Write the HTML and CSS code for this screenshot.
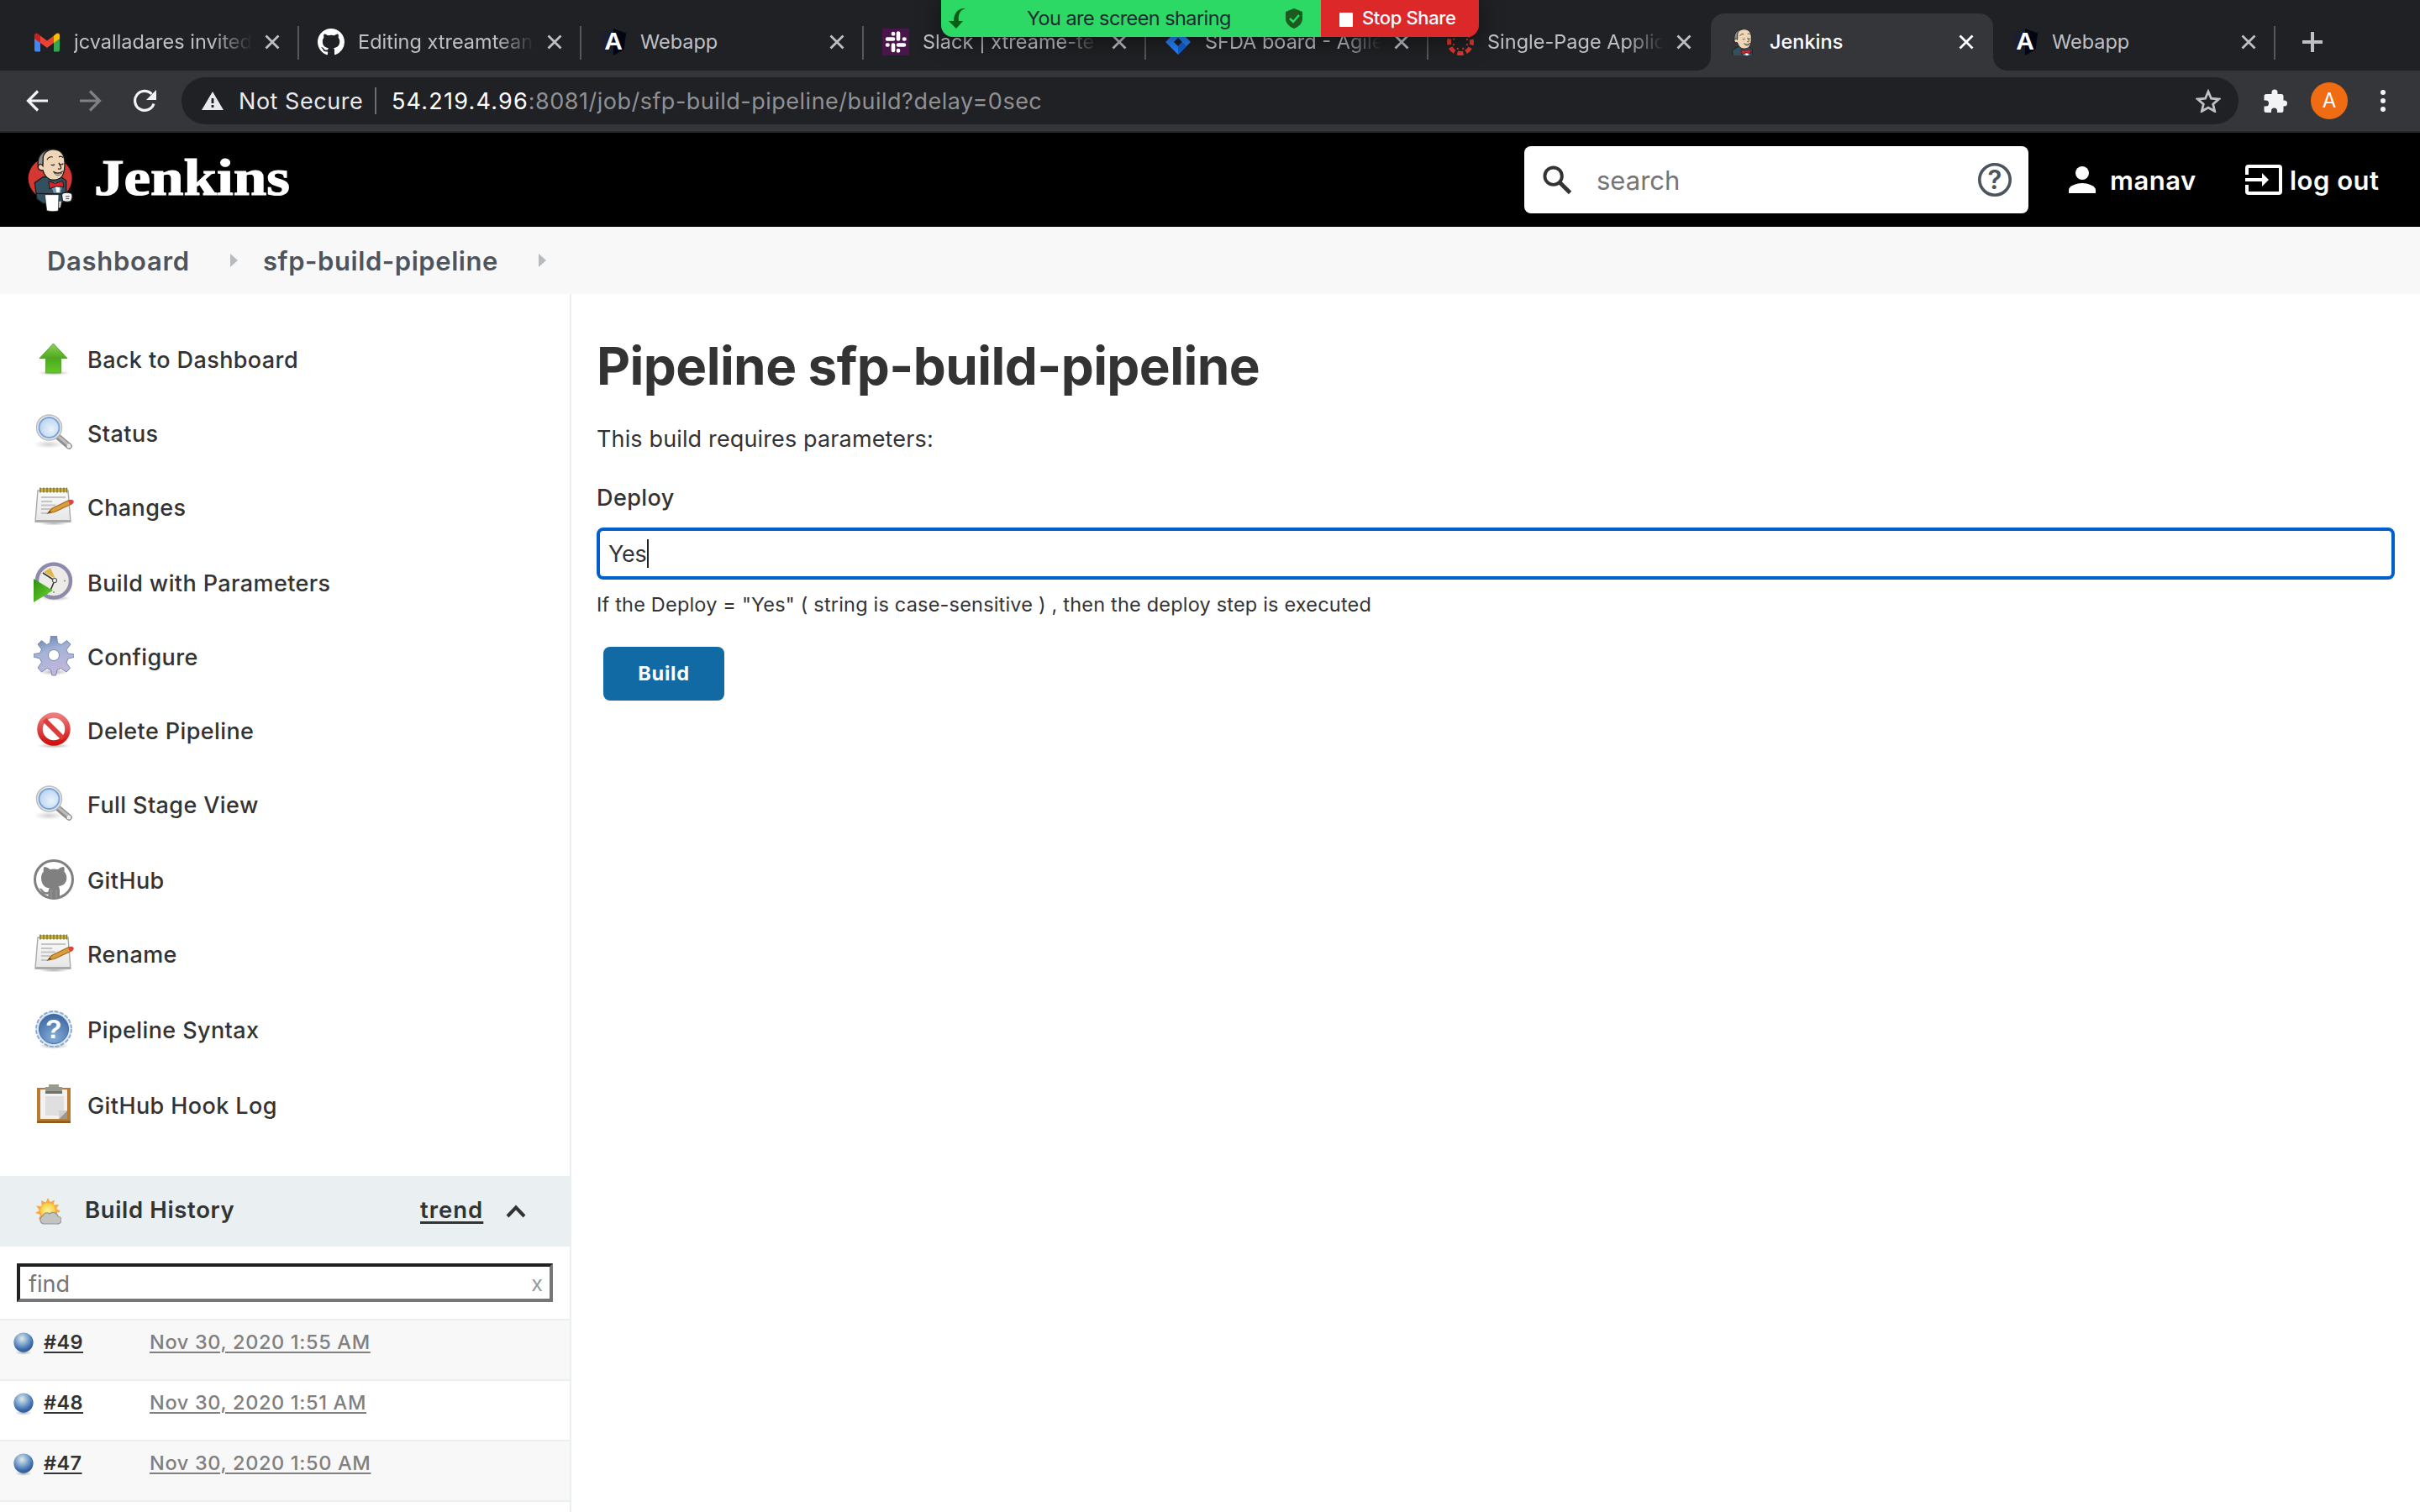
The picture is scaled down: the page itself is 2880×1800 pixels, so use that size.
FILE: index.html
```html
<!DOCTYPE html>
<html lang="en">
<head>
<meta charset="utf-8">
<title>Jenkins</title>
<link rel="stylesheet" href="styles.css">
</head>
<body>
<svg class="defs" aria-hidden="true">
  <defs>
    <linearGradient id="gGreen" x1="0" y1="0" x2="0" y2="1"><stop offset="0" stop-color="#8fd055"/><stop offset=".5" stop-color="#4da81f"/><stop offset="1" stop-color="#63c92b"/></linearGradient>
    <linearGradient id="gPlay" x1="0" y1="0" x2="1" y2="1"><stop offset="0" stop-color="#2c8f10"/><stop offset="1" stop-color="#6fd836"/></linearGradient>
    <linearGradient id="gRed" x1="0" y1="0" x2="0" y2="1"><stop offset="0" stop-color="#ec7a7a"/><stop offset="1" stop-color="#d21010"/></linearGradient>
    <linearGradient id="gGear" x1="0" y1="0" x2=".3" y2="1"><stop offset="0" stop-color="#5f7fae"/><stop offset=".45" stop-color="#a3b3d6"/><stop offset="1" stop-color="#c3b6dc"/></linearGradient>
    <linearGradient id="gPaper" x1="0" y1="0" x2="0" y2="1"><stop offset="0" stop-color="#fafafa"/><stop offset="1" stop-color="#e6e6e6"/></linearGradient>
    <radialGradient id="gLens" cx=".6" cy=".6" r=".7"><stop offset="0" stop-color="#e9f3fc"/><stop offset="1" stop-color="#b4d0ee"/></radialGradient>
    <radialGradient id="gHelp" cx=".5" cy=".8" r=".8"><stop offset="0" stop-color="#85acd8"/><stop offset="1" stop-color="#3c68a2"/></radialGradient>
    <radialGradient id="gBall" cx=".42" cy=".3" r=".75"><stop offset="0" stop-color="#e2eae4"/><stop offset=".35" stop-color="#8fb2d4"/><stop offset=".75" stop-color="#3c6cae"/><stop offset="1" stop-color="#2b5594"/></radialGradient>
    <radialGradient id="gShade"><stop offset="0" stop-color="#000" stop-opacity=".3"/><stop offset="1" stop-color="#000" stop-opacity="0"/></radialGradient>
    <radialGradient id="gSun"><stop offset="0" stop-color="#fff3a0"/><stop offset="1" stop-color="#f5cf3c"/></radialGradient>
  </defs>
  <symbol id="close" viewBox="0 0 18 18"><path d="M1.500 1.500l15 15M16.500 1.500l-15 15" fill="none" stroke="currentColor" stroke-width="2.800"/></symbol>
  <symbol id="github" viewBox="0 0 16 16"><path fill="currentColor" d="M8 0C3.580 0 0 3.580 0 8c0 3.540 2.290 6.530 5.470 7.590.4.070.55-.17.55-.38 0-.19-.01-.82-.01-1.490-2.010.37-2.530-.49-2.690-.94-.09-.23-.48-.94-.82-1.130-.28-.15-.68-.52-.01-.53.63-.01 1.080.58 1.230.82.72 1.210 1.870.87 2.330.66.07-.52.28-.87.51-1.070-1.780-.2-3.640-.89-3.640-3.950 0-.87.31-1.590.82-2.150-.08-.2-.36-1.020.08-2.120 0 0 .67-.21 2.200.82.64-.18 1.320-.27 2-.27.68 0 1.360.09 2 .27 1.530-1.040 2.200-.82 2.200-.82.44 1.100.16 1.920.08 2.120.51.56.82 1.270.82 2.150 0 3.070-1.870 3.750-3.650 3.950.29.25.54.73.54 1.480 0 1.070-.01 1.930-.01 2.200 0 .21.15.46.55.38A8.013 8.013 0 0016 8c0-4.420-3.580-8-8-8z"/></symbol>
  <symbol id="butler" viewBox="39 45 162 228">
    <path d="M92 150l-28 20 8 58 22 16 74-6 8-32 0-44-22-16z" fill="#335061" stroke="#1a1a1a" stroke-width="4"/>
    <path d="M118 170l14 36 24 0 10-40z" fill="#6d9bb5"/>
    <path d="M136 174l6 30 10 0 2-30z" fill="#fff"/>
    <path d="M76 112c-4-34 12-58 44-62l-20 30-2 36z" fill="#8e8e90" stroke="#1a1a1a" stroke-width="4"/>
    <path d="M94 76c6-20 26-27 42-25 24 3 34 20 35 44 1 22-2 40-10 52-8 12-28 16-44 10-12-5-20-18-24-32-12 2-20-6-16-16 3-7 12-6 16 0z" fill="#f0d6b7" stroke="#1a1a1a" stroke-width="4"/>
    <path d="M108 88c4-9 12-12 20-10M150 78c5-4 12-3 15 2M122 105c5 3 9 3 13-1M154 103c4 3 8 3 12-2M150 98c2 10 10 14 8 20-2 4-8 3-11 1M130 130c12 8 24 7 35-2" fill="none" stroke="#1a1a1a" stroke-width="3.500"/>
    <path d="M133 134c10 6 22 5 28 0-6 12-22 12-28 0z" fill="#fff" stroke="#1a1a1a" stroke-width="2"/>
    <path d="M114 164l22 8 28-9 4 22-28-2-24 8z" fill="#d8232a" stroke="#1a1a1a" stroke-width="3"/>
    <path d="M68 208l90 2" stroke="#1a1a1a" stroke-width="4"/>
    <path d="M160 212c4-10 32-10 37-2 3 10 0 24-6 27-10 2-22 0-28-3z" fill="#f4f4f4" stroke="#1a1a1a" stroke-width="4"/>
    <path d="M174 219l14-1M175 227l12 0" stroke="#444" stroke-width="3"/>
    <path d="M148 236l12 0-4 22-8 2z" fill="#c9c9c9"/>
    <path d="M100 212l50 0-2 58c-14 3-28 3-41-1z" fill="#fff" stroke="#1a1a1a" stroke-width="2"/>
  </symbol>
  <symbol id="up" viewBox="0 0 48 48">
    <ellipse cx="24" cy="41" rx="19" ry="3" fill="url(#gShade)"/>
    <path d="M23.500 6L40 23.500h-7.500V41h-18V23.500H7z" fill="url(#gGreen)" stroke="#5aa534" stroke-width="1"/>
  </symbol>
  <symbol id="lens" viewBox="0 0 48 48">
    <ellipse cx="18" cy="38" rx="18" ry="5" fill="url(#gShade)" opacity=".6"/>
    <path d="M29 29l13 11" stroke="#8d8d8d" stroke-width="7.500" stroke-linecap="round"/><path d="M30 29l12 10" stroke="#bdbdbd" stroke-width="3"/>
    <circle cx="42" cy="40" r="2.500" fill="#ededed"/>
    <circle cx="18.500" cy="18" r="15" fill="#eee" stroke="#bcbcbc" stroke-width="1.500"/>
    <circle cx="18.500" cy="18" r="12" fill="url(#gLens)" stroke="#7ba5d6" stroke-width="2"/>
  </symbol>
  <symbol id="note" viewBox="0 0 48 48">
    <ellipse cx="24" cy="44" rx="18" ry="2.500" fill="url(#gShade)"/>
    <path d="M5 5h36l3 37H2z" fill="url(#gPaper)" stroke="#a9a9a9" stroke-width="1.400"/><path d="M2.500 40h41v3h-41z" fill="#aaa"/>
    <path d="M7 2h33v5H7z" fill="#c9b44c"/><path d="M8 1.500v6M12 1.500v6M16 1.500v6M20 1.500v6M24 1.500v6M28 1.500v6M32 1.500v6M36 1.500v6M39.500 1.500v6" stroke="#8d7a20" stroke-width="1.500"/>
    <path d="M9 13h29M9 18h13M9 22.500h17M9 27h11M9 32h8" stroke="#c4c4c4" stroke-width="1.800"/>
    <path d="M17 32l4.500-5.500L42 16.500l3 4.500-20 9.500z" fill="#dc9c3c" stroke="#a06c22" stroke-width="1.200"/><path d="M17 32l2-3 2 1.500z" fill="#444"/>
    <path d="M41 17l3-1.300c4-.5 5 3.500 2 5.300l-2.500 1.300z" fill="#e0443c"/>
  </symbol>
  <symbol id="clock" viewBox="0 0 48 48">
    <ellipse cx="26" cy="43" rx="18" ry="3.500" fill="url(#gShade)"/>
    <circle cx="24" cy="22.500" r="20" fill="#ecebe8" stroke="#8c8bab" stroke-width="4.500"/>
    <path d="M12 12l8-5 6 13z" fill="#dfb64a"/><path d="M11 13l14 9-5 12" fill="none" stroke="#333" stroke-width="1.600"/><circle cx="25" cy="22" r="2.500" fill="#fff" stroke="#555" stroke-width="1.200"/>
    <circle cx="37" cy="22.500" r="1" fill="#888"/><circle cx="24" cy="36" r="1" fill="#888"/>
    <path d="M0 20l23 14L0 48z" fill="url(#gPlay)"/>
  </symbol>
  <symbol id="gear" viewBox="0 0 48 48">
    <ellipse cx="24" cy="43" rx="18" ry="4" fill="url(#gShade)"/>
    <path fill="url(#gGear)" stroke="#7788ae" stroke-width="1" fill-rule="evenodd" d="M20.500 0h7l1 8.500 4.500 2 6.500-5 4.500 4.500-5 6.500 2 4.500 7 1v3.500l-7 1.500-2 5 4.500 6.500-4.500 4.500-6.500-4.500-4.500 2-1.500 6.500h-4.500l-1.500-6.500-4.500-2-6.500 4.500L5 38l4.500-6.500-2-4.500L0 25v-3.500l7.500-1 2-4.500L5 10 9.500 5.500l6 5 4-2zM24 16.500a6.500 6.500 0 100 13 6.500 6.500 0 000-13z"/>
  </symbol>
  <symbol id="stop" viewBox="0 0 48 48">
    <ellipse cx="24" cy="43" rx="20" ry="3" fill="url(#gShade)"/>
    <circle cx="24" cy="23" r="16.500" fill="#fff" stroke="url(#gRed)" stroke-width="6.500"/><path d="M13 12l22 22" stroke="#dd3a3a" stroke-width="6"/>
  </symbol>
  <symbol id="octocat" viewBox="0 0 48 48">
    <circle cx="24" cy="24" r="22.500" fill="#fff" stroke="#808080" stroke-width="3"/>
    <path fill="#808080" d="M12.500 9c3 0 5.500 1.500 7 3 3-.8 6.500-.8 9.500 0 1.500-1.500 4-3 7-3 1 2 .8 4 .3 5.500 2 2 3 4.500 3 7.500 0 7-4.500 9.500-9.800 10.200 1.200 1 1.500 2.500 1.500 4.500V46c-4 1.500-9.500 1.500-13.500 0v-4.500c-5 1-7-1-8.500-3.500-.8-1.500-1.500-2.500-2.500-3.500 3-.5 4 1.500 5.200 3 1.500 2 3.500 2 5.800 1 .2-2.500.8-3.500 1.500-4.200C13.500 34 9 30 9 22c0-3 1-5.500 3-7.500-.5-1.500-.5-3.500.5-5.500z"/>
    <path d="M21 36v10M27 36v10" stroke="#9c9c9c" stroke-width="1"/>
  </symbol>
  <symbol id="clip" viewBox="0 0 48 48">
    <path d="M4 4h40v41H4z" fill="#b97b34"/><path d="M4 43.500h40V46H4z" fill="#8c5a20"/>
    <path d="M8 6h32v35H8z" fill="#f2f2f2"/><path d="M14 14h22v21l-6 2H14z" fill="#dfdfdf"/><path d="M40 31L30 41h10z" fill="#999"/><path d="M30 31h10L30 41z" fill="#cfcfcf"/>
    <path d="M18 0h12v3h4v8H14V3h4z" fill="#989b90"/><path d="M14 8h20v3H14z" fill="#6f7268"/>
  </symbol>
  <symbol id="ball" viewBox="0 0 28 30">
    <ellipse cx="14" cy="27" rx="11" ry="3" fill="url(#gShade)"/><circle cx="14" cy="14" r="12.500" fill="url(#gBall)"/>
  </symbol>
</svg>

<div class="browser">
  <div class="tabs">
    <div class="tab tab-first">
      <svg class="favicon" viewBox="0 0 32 32"><path d="M1 7v18.500q0 2 2 2h5V13z" fill="#4285f4"/><path d="M31 7v18.500q0 2-2 2h-5V13z" fill="#34a853"/><path d="M24 8.500L27 6q4-1.500 4 2.500V12l-7 5z" fill="#fbbc04"/><path d="M8 17V8.500l8 6 8-6V17l-8 6z" fill="#ea4335"/><path d="M1 12V8.500Q1 4.500 5 6l3 2.500V17z" fill="#c5221f"/></svg>
      <span class="tab-title faded">jcvalladares invited</span><svg class="tab-close"><use href="#close"/></svg>
    </div>
    <div class="tab">
      <svg class="favicon light"><use href="#github"/></svg>
      <span class="tab-title faded">Editing xtreamtean</span><svg class="tab-close"><use href="#close"/></svg>
    </div>
    <div class="tab">
      <svg class="favicon" viewBox="0 0 32 32"><path d="M16 0L1 5.500 3.300 25 16 32z" fill="#1b1f2b"/><path d="M16 0l15 5.500L28.700 25 16 32z" fill="#020512"/><text x="16" y="25" text-anchor="middle" class="logo-letter">A</text></svg>
      <span class="tab-title">Webapp</span><svg class="tab-close"><use href="#close"/></svg>
    </div>
    <div class="tab">
      <svg class="favicon" viewBox="0 0 32 32"><rect width="32" height="32" fill="#4a154b"/><g stroke="#fff" stroke-width="4.600" stroke-linecap="round"><path d="M13 6v.5M13 12.500H6M19 5.500v7M26 12.500h.5M19 19.500h7M19 26v.5M13 19.500V26M6 19.500h.5"/></g></svg>
      <span class="tab-title faded">Slack | xtreame-te</span><svg class="tab-close"><use href="#close"/></svg>
    </div>
    <div class="tab">
      <svg class="favicon" viewBox="0 0 32 32"><path d="M16 1l15 15-15 15L1 16z" fill="#2684ff"/><path d="M16 11l5 5-5 5-5-5z" fill="#202124"/><path d="M16 31V21l5-5 5 5z" fill="#1460d2"/></svg>
      <span class="tab-title faded">SFDA board - Agile</span><svg class="tab-close"><use href="#close"/></svg>
    </div>
    <div class="tab tab-last">
      <svg class="favicon" viewBox="0 0 32 32"><g fill="none" stroke="#e0382c"><circle cx="16" cy="16" r="13.500" stroke-width="5" stroke-dasharray="7.200 3.400" stroke-dashoffset="3.600"/><circle cx="16" cy="16" r="8.500" stroke-width="2" stroke-dasharray="2 4.675" stroke-dashoffset="-2.300"/></g></svg>
      <span class="tab-title faded">Single-Page Applic</span><svg class="tab-close"><use href="#close"/></svg>
    </div>
    <div class="tab tab-active">
      <svg class="favicon" viewBox="48 47 150 150"><use href="#butler" x="39" y="45" width="162" height="228"/></svg>
      <span class="tab-title">Jenkins</span><svg class="tab-close"><use href="#close"/></svg>
    </div>
    <div class="tab">
      <svg class="favicon" viewBox="0 0 32 32"><path d="M16 0L1 5.500 3.300 25 16 32z" fill="#1b1f2b"/><path d="M16 0l15 5.500L28.700 25 16 32z" fill="#020512"/><text x="16" y="25" text-anchor="middle" class="logo-letter">A</text></svg>
      <span class="tab-title">Webapp</span><svg class="tab-close"><use href="#close"/></svg>
    </div>
    <svg class="new-tab" viewBox="0 0 24 24"><path d="M12 0v24M0 12h24" stroke="#bdc1c6" stroke-width="4"/></svg>
  </div>
  <div class="share">
    <div class="share-info">
      <svg class="share-arrow" viewBox="0 0 22 26"><path d="M21 1C13 0 7 6 7 16H1l9 9 8-9h-5C12 9 14 3 21 1z" fill="#0c5d16"/></svg>
      <span>You are screen sharing</span>
      <svg class="share-shield" viewBox="0 0 20 24"><path d="M10 0l10 4v8c0 6-5 10-10 12C5 22 0 18 0 12V4z" fill="#1d5a1f"/><path d="M5 12l4 4 7-8" fill="none" stroke="#2bd964" stroke-width="2.500"/></svg>
    </div>
    <div class="share-stop"><i class="share-square"></i><span>Stop Share</span></div>
  </div>
  <div class="toolbar">
    <svg class="nav-icon back" viewBox="0 0 26 26"><path d="M26 13H3M14 1.500L2.500 13 14 24.500" fill="none" stroke="#f1f3f4" stroke-width="3.200"/></svg>
    <svg class="nav-icon forward" viewBox="0 0 26 26"><path d="M0 13h23M12 1.500L23.500 13 12 24.500" fill="none" stroke="#808185" stroke-width="3.200"/></svg>
    <svg class="nav-icon reload" viewBox="0 0 28 28"><path d="M22.500 6A11.500 11.500 0 1025 17.500" fill="none" stroke="#f1f3f4" stroke-width="3.200"/><path d="M28 1v12H16z" fill="#f1f3f4"/></svg>
    <div class="omnibox">
      <svg class="warn" viewBox="0 0 26 22"><path d="M13 0l13 22H0z" fill="#e8eaed"/><path d="M13 8v6M13 16v3" stroke="#202124" stroke-width="2.800"/></svg>
      <span class="not-secure">Not Secure</span>
      <i class="omni-sep"></i>
      <span class="url"><b>54.219.4.96</b>:8081/job/sfp-build-pipeline/build?delay=0sec</span>
      <svg class="star" viewBox="0 0 30 28"><path d="M15 3l3.500 8.200 9 .8-6.800 6 2 8.500L15 22l-7.700 4.500 2-8.500-6.800-6 9-.8z" fill="none" stroke="#bfc1c4" stroke-width="2.800"/></svg>
    </div>
    <svg class="puzzle" viewBox="0 0 28 28"><path d="M3 6h6.500V4a3.500 3.500 0 017 0v2H21q2.500 0 2.500 2.500v5h1a3.500 3.500 0 010 7h-1v5q0 2.500-2.500 2.500h-5v-2a3.500 3.500 0 00-7 0v2H3q-2.500 0-2.500-2.500v-5h2a3.500 3.500 0 000-7h-2v-5Q.5 6 3 6z" fill="#f1f3f4"/></svg>
    <span class="avatar">A</span>
    <span class="menu"><i></i><i></i><i></i></span>
  </div>
</div>

<header class="header">
  <svg class="brand-logo" viewBox="39 45 162 228"><ellipse cx="119" cy="154" rx="78" ry="76" fill="#d33833"/><use href="#butler" x="39" y="45" width="162" height="228"/></svg>
  <svg class="brand-name" viewBox="0 0 236 60"><text x="0" y="48" textLength="233" lengthAdjust="spacingAndGlyphs">Jenkins</text></svg>
  <div class="search">
    <svg class="search-icon" viewBox="0 0 36 36"><circle cx="13" cy="13" r="10.500" fill="none" stroke="#333" stroke-width="4"/><path d="M20 20l13.500 13.500" stroke="#333" stroke-width="5"/></svg>
    <span>search</span>
    <svg class="help-icon" viewBox="0 0 40 40"><circle cx="20" cy="20" r="18.200" fill="none" stroke="#4d545d" stroke-width="3.600"/><text x="20" y="31" text-anchor="middle">?</text></svg>
  </div>
  <svg class="user-icon" viewBox="0 0 32 32"><circle cx="16" cy="8" r="8" fill="#fff"/><path d="M0 32v-4c0-5 10-8 16-8s16 3 16 8v4z" fill="#fff"/></svg>
  <span class="user">manav</span>
  <svg class="logout-icon" viewBox="0 0 44 36"><path d="M2 12V4q0-2 2-2h36q2 0 2 2v28q0 2-2 2H4q-2 0-2-2v-8" fill="none" stroke="#fff" stroke-width="4"/><path d="M0 16h20v-6l8 8-8 8v-6H0z" fill="#fff"/></svg>
  <span class="logout">log out</span>
</header>

<nav class="crumbs">
  <span>Dashboard</span><i class="crumb-arrow first"></i><span>sfp-build-pipeline</span><i class="crumb-arrow second"></i>
</nav>

<div class="page">
  <aside class="side">
    <ul class="tasks">
      <li><svg><use href="#up"/></svg><span>Back to Dashboard</span></li>
      <li><svg><use href="#lens"/></svg><span>Status</span></li>
      <li><svg><use href="#note"/></svg><span>Changes</span></li>
      <li class="tall"><svg><use href="#clock"/></svg><span>Build with Parameters</span></li>
      <li><svg><use href="#gear"/></svg><span>Configure</span></li>
      <li><svg><use href="#stop"/></svg><span>Delete Pipeline</span></li>
      <li><svg><use href="#lens"/></svg><span>Full Stage View</span></li>
      <li class="tall"><svg><use href="#octocat"/></svg><span>GitHub</span></li>
      <li><svg><use href="#note"/></svg><span>Rename</span></li>
      <li class="tall"><svg viewBox="0 0 48 48"><ellipse cx="24" cy="44" rx="18" ry="4" fill="url(#gShade)"/><circle cx="24" cy="24" r="21" fill="#dce7f4" stroke="#88a8d0" stroke-width="1.800" stroke-dasharray="5 1.600"/><circle cx="24" cy="24" r="17.500" fill="url(#gHelp)" stroke="#3f6aa5" stroke-width="1"/><text x="24" y="35" text-anchor="middle" class="syntax-mark">?</text></svg><span>Pipeline Syntax</span></li>
      <li class="tall"><svg><use href="#clip"/></svg><span>GitHub Hook Log</span></li>
    </ul>
    <div class="history-head">
      <svg class="weather" viewBox="0 0 32 32"><path d="M16 0l2.500 5 5.500-2.500-1.500 6L29 8l-3 5 5 3-5 2.500 1 6-22 1L7 20l-6-2 5-3-4-5.500 6.500.5L8 3l5.500 2.500z" fill="#f7a945"/><circle cx="16" cy="15" r="9" fill="url(#gSun)"/><path d="M11 31a5 5 0 01-1-9.500 5 5 0 018-2.500 6 6 0 0110 3 4.500 4.500 0 01-1 9z" fill="#c3c3c1" stroke="#949492" stroke-width="1.200"/></svg>
      <span class="history-title">Build History</span>
      <a class="trend">trend</a>
      <svg class="chevron" viewBox="0 0 24 16"><path d="M2 14L12 3.500 22 14" fill="none" stroke="#333" stroke-width="4"/></svg>
    </div>
    <div class="find-wrap"><div class="find"><span>find</span><span class="clear">x</span></div></div>
    <div class="build odd"><svg><use href="#ball"/></svg><span class="num"><a>#49</a></span><a class="date">Nov 30, 2020 1:55 AM</a></div>
    <div class="build"><svg><use href="#ball"/></svg><span class="num"><a>#48</a></span><a class="date">Nov 30, 2020 1:51 AM</a></div>
    <div class="build odd"><svg><use href="#ball"/></svg><span class="num"><a>#47</a></span><a class="date">Nov 30, 2020 1:50 AM</a></div>
    <div class="build-end"></div>
  </aside>
  <main class="main">
    <h1>Pipeline sfp-build-pipeline</h1>
    <p class="intro">This build requires parameters:</p>
    <div class="label">Deploy</div>
    <div class="input"><span>Yes</span><i class="caret"></i></div>
    <p class="hint">If the Deploy = "Yes" ( string is case-sensitive ) , then the deploy step is executed</p>
    <button class="build-btn">Build</button>
  </main>
</div>
</body>
</html>
```
FILE: styles.css
```css
* { box-sizing: border-box; }
body { margin: 0; height: 1800px; overflow: hidden; display: flex; flex-direction: column; background: #fff; color: #333; font-family: Inter, "Liberation Sans", sans-serif; font-size: 27px; white-space: nowrap; }
svg { flex: none; display: block; }
.defs { position: absolute; width: 0; height: 0; }
.logo-letter { font: 700 30px "Liberation Sans", sans-serif; fill: #fff; }
.syntax-mark { font: 700 32px "Liberation Sans", sans-serif; fill: #fff; }

.browser { position: relative; height: 158px; flex: none; background: #202124; border-bottom: 2px solid #28292b; }
.tabs { display: flex; align-items: flex-end; height: 84px; padding-left: 20px; }
.tab { position: relative; display: flex; align-items: center; width: 336px; height: 68px; padding-left: 22px; color: #bdc1c6; font-size: 23.5px; }
.tab::after { content: ""; position: absolute; right: 0; top: 15px; width: 2px; height: 40px; background: #55575b; }
.tab-first { padding-left: 20px; }
.tab-last::after, .tab-active::after { display: none; }
.favicon { width: 32px; height: 32px; margin-right: 16px; }
.light { color: #fff; }
.tab-title { width: 210px; overflow: hidden; margin-right: 15px; line-height: 32px; }
.tab-first .tab-title { width: 212px; }
.faded { -webkit-mask-image: linear-gradient(90deg, #000 78%, transparent); mask-image: linear-gradient(90deg, #000 78%, transparent); }
.tab-close { width: 18px; height: 18px; }
.tab-active { background: #35363a; border-radius: 16px 16px 0 0; color: #fff; font-weight: 500; }
.tab-active::before { content: ""; position: absolute; left: -16px; right: -16px; bottom: 0; height: 16px; background: radial-gradient(circle at 0 0, transparent 15.5px, #35363a 16px) left / 16px 16px no-repeat, radial-gradient(circle at 100% 0, transparent 15.5px, #35363a 16px) right / 16px 16px no-repeat; }
.new-tab { width: 24px; height: 24px; margin: 0 0 22px 32px; }

.share { position: absolute; left: 1120px; top: 0; display: flex; width: 640px; height: 44px; border-radius: 0 0 14px 14px; overflow: hidden; box-shadow: 0 4px 28px rgba(0, 0, 0, .5); }
.share-info { display: flex; align-items: center; width: 452px; background: #2bd964; color: #1f2a33; font-size: 23.5px; letter-spacing: -.58px; }
.share-info span { width: 308px; margin-top: -1px; }
.share-arrow { width: 22px; height: 26px; margin: 0 72px 0 8px; }
.share-shield { width: 20px; height: 24px; }
.share-stop { display: flex; align-items: center; width: 188px; padding-left: 22px; background: #dc2828; color: #fff; font-size: 22px; font-weight: 500; letter-spacing: -.36px; }
.share-stop span { margin-top: -2px; }
.share-square { width: 16px; height: 17px; margin: 2px 11px 0 0; background: #fff; border-radius: 1px; }

.toolbar { display: flex; align-items: center; height: 72px; background: #35363a; }
.nav-icon { width: 26px; height: 26px; }
.back { margin-left: 31px; }
.forward { margin-left: 38px; }
.reload { width: 28px; height: 28px; margin-left: 37px; }
.omnibox { display: flex; align-items: center; width: 2448px; height: 56px; margin-left: 30px; padding-left: 24px; border-radius: 28px; background: #202124; }
.warn { width: 26px; height: 22px; }
.not-secure { width: 162px; margin-left: 18px; color: #e8eaed; letter-spacing: .54px; }
.omni-sep { width: 2px; height: 32px; background: #6b6d70; }
.url { flex: 1; margin-left: 18px; color: #8f9194; letter-spacing: .49px; }
.url b { font-weight: 400; color: #fff; letter-spacing: 1.2px; }
.star { width: 30px; height: 28px; margin-right: 21px; }
.puzzle { width: 28px; height: 28px; margin-left: 30px; }
.avatar { width: 44px; height: 44px; margin-left: 28px; border-radius: 50%; background: #f06c12; color: #fff; font-size: 24px; line-height: 44px; text-align: center; }
.menu { display: flex; flex-direction: column; gap: 4px; margin-left: 39px; }
.menu i { width: 6px; height: 6px; border-radius: 50%; background: #f1f3f4; }

.header { display: flex; align-items: center; height: 112px; flex: none; background: #000; color: #fff; font-size: 31px; font-weight: 600; }
.brand-logo { width: 54px; height: 76px; margin-left: 33px; }
.brand-name { width: 236px; height: 60px; margin: 0 0 0 25px; overflow: visible; }
.brand-name text { font: 700 61px "Liberation Serif", serif; fill: #fff; stroke: #fff; stroke-width: 1.2px; }
.search { display: flex; align-items: center; width: 600px; height: 80px; margin-left: 1466px; padding: 0 20px 0 22px; border-radius: 8px; background: #fff; color: #757575; font-weight: 400; }
.search-icon { width: 35px; height: 35px; }
.search span { flex: 1; margin-left: 29px; }
.help-icon { width: 40px; height: 40px; }
.help-icon text { font: 600 31px Inter, sans-serif; fill: #4d545d; }
.user-icon { width: 32px; height: 32px; margin-left: 48px; }
.user { width: 161px; margin-left: 17px; letter-spacing: .5px; }
.logout-icon { width: 44px; height: 36px; }
.logout { margin-left: 9px; letter-spacing: .49px; }

.crumbs { display: flex; align-items: center; height: 80px; flex: none; padding-left: 56px; background: #f8f8f8; color: #4d545d; font-size: 31px; font-weight: 600; letter-spacing: .56px; }
.crumbs span:first-child { width: 171px; letter-spacing: .7px; }
.crumb-arrow { border: solid transparent; border-width: 8px 0 8px 9px; border-left-color: #b8bbbe; }
.first { margin: 0 30px 0 47px; }
.second { margin-left: 48px; }

.page { display: flex; flex: 1; min-height: 0; }
.side { width: 680px; border-right: 2px solid #eaeff2; }
.tasks { margin: 0 0 40px; padding: 34px 0 0 40px; list-style: none; }
.tasks li { display: flex; align-items: center; height: 88px; font-weight: 500; letter-spacing: .4px; }
.tasks .tall { height: 90px; padding-top: 2px; }
.tasks svg { width: 48px; height: 48px; margin: 0 16px 2px 0; }
.history-head { display: flex; align-items: center; height: 84px; padding-left: 41px; background: #eaeff2; font-size: 27.5px; font-weight: 600; }
.history-head span, .history-head a { margin-top: -4px; }
.weather { width: 32px; height: 32px; }
.history-title { width: 399px; margin-left: 28px; letter-spacing: .65px; }
.trend { letter-spacing: 1px; text-decoration: underline; text-decoration-thickness: 2.5px; text-underline-offset: 4px; }
.chevron { width: 24px; height: 16px; margin-left: 27px; }
.find-wrap { height: 86px; padding: 20px; }
.find { display: flex; align-items: center; justify-content: space-between; width: 638px; height: 46px; padding: 2px 8px 0 10px; border: 4px solid; border-color: #212121 #767676 #767676 #212121; color: #757575; }
.find .clear { color: #999; font-size: 25px; }
.build { display: flex; align-items: center; height: 72px; padding: 0 0 19px 15px; border-top: 2px solid #eaeff2; font-size: 23.5px; }
.build svg { width: 26px; height: 28px; margin-top: 3px; }
.odd { background: #f8f8f8; }
.build a { text-decoration: underline; text-decoration-thickness: 2px; text-underline-offset: 3px; }
.num { width: 126px; margin-left: 11px; font-weight: 600; letter-spacing: .4px; }
.date { color: #808080; font-weight: 500; letter-spacing: .66px; }
.build-end { border-top: 2px solid #eaeff2; }

.main { flex: 1; padding: 46px 30px 0; }
.main p, h1 { margin: 0; }
h1 { font-size: 62px; line-height: 80px; font-weight: 700; letter-spacing: -.58px; }
.main .intro { margin-top: 27px; line-height: 40px; letter-spacing: .14px; }
.label { margin-top: 30px; line-height: 40px; font-weight: 500; letter-spacing: .4px; }
.input { display: flex; align-items: center; width: 2140px; height: 62px; margin-top: 15px; padding-left: 10px; border: 4px solid #005fcc; border-radius: 8px; }
.input span { padding-top: 1px; letter-spacing: -.2px; }
.caret { width: 2px; height: 34px; background: #222; }
.hint { padding-top: 10px; font-size: 23.5px; line-height: 40px; letter-spacing: .19px; }
.build-btn { display: block; width: 144px; height: 64px; margin: 30px 0 0 8px; padding: 0 0 1px; border: 0; border-radius: 8px; background: #116aa3; color: #fff; font: 700 23.5px Inter, sans-serif; letter-spacing: .77px; }
```
